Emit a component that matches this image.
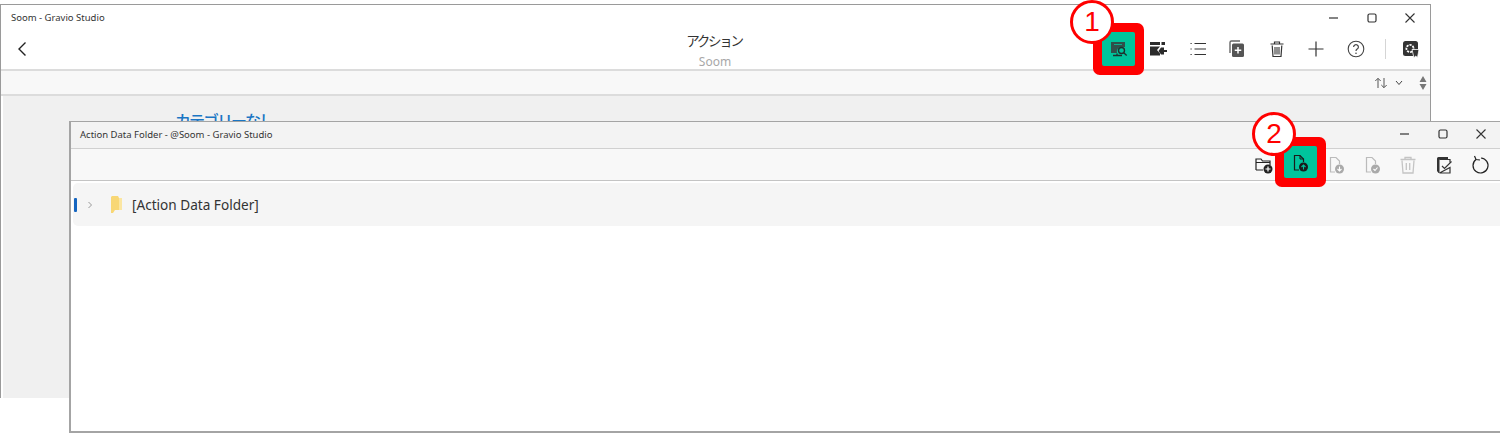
<div class="stage">
	<section class="win back">
		<div class="titlebar">
			<span class="wintitle">Soom - Gravio Studio</span>
			<div class="controls">
				<svg width="12" height="12" viewBox="0 0 12 12"><path d="M1 6h9" stroke="#333" stroke-width="1.2" /></svg>
				<svg width="12" height="12" viewBox="0 0 12 12"
					><rect x="2" y="2" width="8" height="8" rx="1.5" fill="none" stroke="#333" stroke-width="1.2" /></svg
				>
				<svg width="12" height="12" viewBox="0 0 12 12"><path d="M1.5 1.5l9 9M10.5 1.5l-9 9" stroke="#333" stroke-width="1.1" /></svg>
			</div>
		</div>
		<header class="head">
			<svg class="backarrow" width="12" height="16" viewBox="0 0 12 16"><path d="M9.5 1.5L3 8l6.500 6.500" fill="none" stroke="#222" stroke-width="1.4" /></svg>
			<div class="headtitle">
				<div class="main">アクション</div>
				<div class="sub">Soom</div>
			</div>
			<div class="tools">
				<span class="tool">
					<span class="hl">
						<svg width="20" height="20" viewBox="0 0 20 20">
							<path d="M2 3h14v5h-4a4.500 4.500 0 0 0-4 6H2z" fill="#2f4f4a" />
							<path d="M5 5.500h8" stroke="#00c49c" stroke-width=".8" />
							<circle cx="12.500" cy="11.500" r="3" fill="none" stroke="#1d2f2c" stroke-width="1.400" />
							<path d="M14.700 13.700l3 2.800M4 16.500h9M8 14.500v2" stroke="#1d2f2c" stroke-width="1.300" />
						</svg>
					</span>
				</span>
				<span class="tool">
					<svg width="20" height="20" viewBox="0 0 20 20">
						<path d="M2 3h10v3H2zM13.500 3H17v3h-3.500zM2 7.500h10l-3 3.500 3 3.500v2H2zM13 8.500h3V11h3v2h-3v2.500h-3l-2.500-3.500z" fill="#2b2b2b" />
					</svg>
				</span>
				<span class="tool">
					<svg width="20" height="20" viewBox="0 0 20 20">
						<path d="M6.500 4.500H18M6.500 10H18M6.500 15.500H18" stroke="#333" stroke-width="1.100" />
						<path d="M2.500 4.500h1.600M2.500 10h1.600M2.500 15.500h1.600" stroke="#333" stroke-width="1.200" stroke-dasharray="1.200 .6" />
					</svg>
				</span>
				<span class="tool">
					<svg width="20" height="20" viewBox="0 0 20 20">
						<path d="M3 14V3.500A1.500 1.500 0 0 1 4.500 2H13" fill="none" stroke="#666" stroke-width="1.400" />
						<rect x="5" y="4.500" width="12" height="13.500" rx="1.500" fill="#555" />
						<path d="M11 8v6.500M7.750 11.250h6.500" stroke="#fff" stroke-width="1.500" />
					</svg>
				</span>
				<span class="tool">
					<svg width="20" height="20" viewBox="0 0 20 20">
						<path d="M3.500 5h13M7.500 5V3h5v2" fill="none" stroke="#333" stroke-width="1.200" />
						<path d="M5.200 6.500l.8 11h8l.8-11" fill="none" stroke="#333" stroke-width="1.200" />
						<path d="M8 8v7.500M10 8v7.500M12 8v7.500" stroke="#333" stroke-width="1.100" />
					</svg>
				</span>
				<span class="tool">
					<svg width="20" height="20" viewBox="0 0 20 20"><path d="M10 2.500v15M2.500 10h15" stroke="#333" stroke-width="1.200" /></svg>
				</span>
				<span class="tool">
					<svg width="20" height="20" viewBox="0 0 20 20">
						<circle cx="10" cy="10" r="7.800" fill="none" stroke="#444" stroke-width="1.100" />
						<path d="M7.600 8a2.400 2.400 0 1 1 3.600 2.100c-.8.500-1.200 1-1.200 2" fill="none" stroke="#444" stroke-width="1.200" />
						<circle cx="10" cy="14.300" r=".8" fill="#444" />
					</svg>
				</span>
				<span class="vsep"></span>
				<span class="tool">
					<svg width="20" height="20" viewBox="0 0 20 20">
						<rect x="2" y="2" width="15" height="15" rx="2.500" fill="#333" />
						<circle cx="9" cy="9.500" r="3.600" fill="none" stroke="#fff" stroke-width="1.800" stroke-dasharray="2.200 1" />
						<path d="M11 10.500h7l-1.500 8-2-1.500-1.500 2z" fill="#333" stroke="#fff" stroke-width=".8" />
					</svg>
				</span>
			</div>
		</header>
		<div class="sortbar">
			<svg width="14" height="12" viewBox="0 0 14 12"><path d="M4 11V1.500M1.300 4L4 1.300 6.700 4M10 1v9.500M7.300 8L10 10.700 12.700 8" fill="none" stroke="#555" stroke-width="1" /></svg>
			<svg class="sortchev" width="8" height="6" viewBox="0 0 8 6"><path d="M1 1l3 3.500L7 1" fill="none" stroke="#444" stroke-width="1" /></svg>
			<svg class="updown" width="8" height="14" viewBox="0 0 8 14"><path d="M4 0l3.500 6h-7zM4 14L.5 8h7z" fill="#777" /></svg>
		</div>
		<div class="body">
			<h2>カテゴリーなし</h2>
		</div>
	</section>

	<section class="win front">
		<div class="titlebar">
			<span class="wintitle">Action Data Folder - @Soom - Gravio Studio</span>
			<div class="controls">
				<svg width="12" height="12" viewBox="0 0 12 12"><path d="M1 6h9" stroke="#333" stroke-width="1.2" /></svg>
				<svg width="12" height="12" viewBox="0 0 12 12"
					><rect x="2" y="2" width="8" height="8" rx="1.5" fill="none" stroke="#333" stroke-width="1.2" /></svg
				>
				<svg width="12" height="12" viewBox="0 0 12 12"><path d="M1.5 1.5l9 9M10.5 1.5l-9 9" stroke="#333" stroke-width="1.1" /></svg>
			</div>
		</div>
		<div class="toolbar">
			<span class="tool2">
				<svg width="20" height="20" viewBox="0 0 20 20">
					<path d="M2 15V4h5l1.500 2H16v4" fill="none" stroke="#222" stroke-width="1.200" />
					<path d="M2 7.500h14M2 15h7" stroke="#222" stroke-width="1.200" />
					<circle cx="14" cy="14" r="4.500" fill="#222" />
					<path d="M14 11.500v5M11.500 14h5" stroke="#fff" stroke-width="1.200" />
				</svg>
			</span>
			<span class="tool2">
				<span class="hl">
					<svg width="20" height="20" viewBox="0 0 20 20">
						<path d="M9 17H4.500V2.500H10l3.500 3.500v3" fill="none" stroke="#1a1a1a" stroke-width="1.200" />
						<path d="M10 2.500V6h3.500" fill="none" stroke="#1a1a1a" stroke-width="1" />
						<circle cx="13.500" cy="14" r="4.500" fill="#1a1a1a" />
						<path d="M13.500 16.500V12M11.500 14l2-2 2 2" fill="none" stroke="#00c49c" stroke-width="1.100" />
					</svg>
				</span>
			</span>
			<span class="tool2">
				<svg width="20" height="20" viewBox="0 0 20 20">
					<path d="M9 17H4.500V2.500H10l3.500 3.500v3" fill="none" stroke="#bbb" stroke-width="1.200" />
					<circle cx="13.500" cy="14" r="4.500" fill="#aaa" />
					<path d="M13.500 11.500V16M11.500 14l2 2 2-2" fill="none" stroke="#fff" stroke-width="1.100" />
				</svg>
			</span>
			<span class="tool2">
				<svg width="20" height="20" viewBox="0 0 20 20">
					<path d="M9 17H4.500V2.500H10l3.500 3.500v3" fill="none" stroke="#bbb" stroke-width="1.200" />
					<circle cx="13.500" cy="14" r="4.500" fill="#aaa" />
					<path d="M11.500 14l1.500 1.500 2.500-3" fill="none" stroke="#fff" stroke-width="1.100" />
				</svg>
			</span>
			<span class="tool2">
				<svg width="20" height="20" viewBox="0 0 20 20">
					<path d="M2.500 4.500h15M7 4.500V2.500h6v2" fill="none" stroke="#c4c4c4" stroke-width="1.300" />
					<path d="M4 5.500l1 12.500h10l1-12.500" fill="none" stroke="#c4c4c4" stroke-width="1.300" />
					<path d="M8.300 8v7M11.700 8v7" stroke="#c4c4c4" stroke-width="1.300" />
				</svg>
			</span>
			<span class="tool2">
				<svg width="20" height="20" viewBox="0 0 20 20">
					<path d="M3 14.500V3.500A1.500 1.500 0 0 1 4.500 2H14v2.500H5.500V18H4.500L3 16z" fill="#333" />
					<path d="M5.500 4.500H16v3M16 12.500V18H5.500z" fill="none" stroke="#333" stroke-width="1.200" />
					<path d="M8 11l2.500 2.500L17.500 6.500" fill="none" stroke="#333" stroke-width="1.200" />
				</svg>
			</span>
			<span class="tool2">
				<svg width="20" height="20" viewBox="0 0 20 20">
					<path d="M6 4.500a7.500 7.500 0 1 0 5-1.500" fill="none" stroke="#222" stroke-width="1.200" />
					<path d="M4.500 1l1.500 3.500L10 5" fill="none" stroke="#222" stroke-width="1.200" />
				</svg>
			</span>
		</div>
		<div class="content">
			<div class="row">
				<span class="mark"></span>
				<svg class="chev" width="6" height="8" viewBox="0 0 6 8"><path d="M1.500 1l3 3-3 3" fill="none" stroke="#999" stroke-width="1" /></svg>
				<svg class="folder" width="14" height="20" viewBox="0 0 14 20">
					<path d="M3 1h6l1 2h3v12H6l-2 3H2V2z" fill="#f8d775" />
					<path d="M10 3h3v12h-3z" fill="#fbe6a2" />
				</svg>
				<span class="label">[Action Data Folder]</span>
			</div>
		</div>
	</section>

	<div class="badge b1">1</div>
	<div class="badge b2">2</div>
</div>

<style>
	:global(body) {
		margin: 0;
		background: #fff;
	}
	.stage {
		position: relative;
		width: 1500px;
		height: 433px;
		overflow: hidden;
		font-family: 'Noto Sans', 'Noto Sans CJK JP', sans-serif;
		color: #222;
	}
	.win {
		position: absolute;
		box-sizing: border-box;
		display: flex;
		flex-direction: column;
		background: #fff;
		border: 1px solid #9a9a9a;
	}
	.back {
		left: 0;
		top: 4px;
		width: 1431px;
		height: 394px;
		border-bottom: none;
	}
	.front {
		left: 69px;
		top: 121px;
		width: 1440px;
		height: 312px;
		border-left-width: 2px;
		border-bottom-width: 2px;
		border-color: #a4a4a4;
	}
	.titlebar {
		position: relative;
		flex: none;
		box-sizing: border-box;
		height: 26px;
		display: flex;
		align-items: center;
		padding: 0 0 2px 10px;
	}
	.front .titlebar {
		height: 27px;
		padding-left: 9px;
		background: #f3f3f3;
		border-bottom: 1px solid #d0d0d0;
	}
	.wintitle {
		font-size: 9.5px;
		color: #333;
	}
	.controls {
		position: absolute;
		top: 7px;
		display: flex;
		gap: 26px;
	}
	.back .controls {
		right: 14px;
	}
	.front .controls {
		left: 1328px;
		top: 6px;
	}
	.head {
		position: relative;
		flex: none;
		height: 40px;
		box-sizing: border-box;
		border-bottom: 2px solid #dcdcdc;
		display: flex;
		align-items: center;
		justify-content: space-between;
	}
	.backarrow {
		margin-left: 15px;
		margin-top: -3px;
	}
	.headtitle {
		position: absolute;
		left: 613px;
		width: 200px;
		top: 0;
		text-align: center;
	}
	.main {
		font-size: 13.5px;
		line-height: 20px;
		letter-spacing: -2.3px;
		color: #333;
	}
	.sub {
		margin-top: 3px;
		margin-left: 2px;
		font-size: 12px;
		line-height: 16px;
		color: #a8a8a8;
	}
	.tools {
		display: flex;
		align-items: center;
		margin-top: -2px;
		margin-right: -1px;
	}
	.tool {
		width: 39.5px;
		height: 24px;
		display: flex;
		align-items: center;
		justify-content: center;
	}
	.hl {
		position: relative;
		flex: none;
		width: 33px;
		height: 34px;
		display: flex;
		align-items: center;
		justify-content: center;
		background: #00c49c;
		border-radius: 2px;
		box-shadow: 0 0 0 9px #ff0000;
	}
	.vsep {
		width: 1px;
		height: 20px;
		margin: 0 6px 0 9px;
		background: #d5d5d5;
	}
	.sortbar {
		flex: none;
		height: 25px;
		box-sizing: border-box;
		background: #f8f8f8;
		border-bottom: 2px solid #dcdcdc;
		display: flex;
		align-items: center;
		justify-content: flex-end;
		padding-right: 3px;
	}
	.sortchev {
		margin-left: 7px;
	}
	.updown {
		margin-left: 16px;
	}
	.body {
		flex: 1;
		background: #f0f0f0;
		margin-left: 2px;
		padding: 14px 0 0 172px;
	}
	h2 {
		margin: 0;
		font-size: 16px;
		line-height: 22px;
		font-weight: 500;
		letter-spacing: -2px;
		color: #1b76c4;
	}
	.toolbar {
		flex: none;
		height: 32px;
		box-sizing: border-box;
		background: #f8f8f8;
		border-bottom: 1px solid #c4c4c4;
		display: flex;
		align-items: center;
		padding-left: 1175px;
	}
	.tool2 {
		width: 36px;
		height: 24px;
		display: flex;
		align-items: center;
		justify-content: center;
	}
	.tool2 .hl {
		height: 32px;
		margin-top: -5px;
	}
	.tool2 .hl svg {
		margin-top: 2px;
	}
	.content {
		flex: 1;
		padding: 2px 0 0 2px;
	}
	.row {
		height: 43px;
		background: #f5f5f5;
		border-radius: 5px;
		display: flex;
		align-items: center;
	}
	.mark {
		width: 3px;
		height: 14px;
		margin-left: 1px;
		background: #1565c0;
		border-radius: 1px;
	}
	.chev {
		margin-left: 10px;
	}
	.folder {
		margin-left: 16px;
	}
	.label {
		margin-left: 9px;
		font-size: 13.6px;
		color: #333;
	}
	.badge {
		position: absolute;
		box-sizing: border-box;
		width: 44px;
		height: 44px;
		border: 3.5px solid #ff0000;
		border-radius: 50%;
		background: #fff;
		color: #ff0000;
		font-family: 'Liberation Sans', sans-serif;
		font-size: 28px;
		line-height: 37px;
		text-align: center;
	}
	.b1 {
		left: 1070px;
		top: 0;
	}
	.b2 {
		left: 1252px;
		top: 112px;
	}
</style>
